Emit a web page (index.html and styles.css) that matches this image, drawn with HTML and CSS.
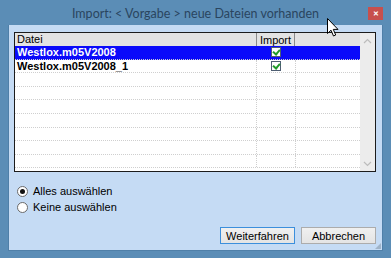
FILE: index.html
```html
<!DOCTYPE html>
<html>
<head>
<meta charset="utf-8">
<title>Import</title>
<link rel="stylesheet" href="styles.css">
</head>
<body>
    <div class="window">
        <!-- Titelleiste -->
        <div class="titlebar">
            <span></span>
            <span class="title">Import: &lt; Vorgabe &gt; neue Dateien vorhanden</span>
            <span class="close-wrap"><span class="close">&#x2715;</span></span>
        </div>

        <div class="client">
            <!-- Liste -->
            <div class="list">
                <div class="grid">
                    <div class="row head">
                        <div class="c-name">Datei</div>
                        <div class="c-imp">Import</div>
                        <div class="c-rest"></div>
                    </div>
                    <div class="row sel">
                        <div class="c-name">Westlox.m05V2008</div>
                        <div class="c-imp"><span class="chk"></span></div>
                        <div class="c-rest"></div>
                    </div>
                    <div class="row">
                        <div class="c-name">Westlox.m05V2008_1</div>
                        <div class="c-imp"><span class="chk"></span></div>
                        <div class="c-rest"></div>
                    </div>
                    <div class="row"><div class="c-name"></div><div class="c-imp"></div><div class="c-rest"></div></div>
                    <div class="row"><div class="c-name"></div><div class="c-imp"></div><div class="c-rest"></div></div>
                    <div class="row"><div class="c-name"></div><div class="c-imp"></div><div class="c-rest"></div></div>
                    <div class="row"><div class="c-name"></div><div class="c-imp"></div><div class="c-rest"></div></div>
                    <div class="row"><div class="c-name"></div><div class="c-imp"></div><div class="c-rest"></div></div>
                    <div class="row"><div class="c-name"></div><div class="c-imp"></div><div class="c-rest"></div></div>
                    <div class="row"><div class="c-name"></div><div class="c-imp"></div><div class="c-rest"></div></div>
                </div>
                <div class="scroll">
                    <svg width="9" height="6" viewBox="0 0 9 6"><path d="M1 5 L4.5 1.5 L8 5" fill="none" stroke="#bcbcbc" stroke-width="1.2"/></svg>
                    <svg width="9" height="6" viewBox="0 0 9 6"><path d="M1 1 L4.5 4.5 L8 1" fill="none" stroke="#bcbcbc" stroke-width="1.2"/></svg>
                </div>
            </div>

            <!-- Auswahl -->
            <div class="radios">
                <label class="radio on"><span class="dot"></span>Alles auswählen</label>
                <label class="radio"><span class="dot"></span>Keine auswählen</label>
            </div>

            <div class="buttons">
                <span class="btn focus">Weiterfahren</span>
                <span class="btn">Abbrechen</span>
            </div>
            <span class="grip"></span>
        </div>
    </div>

    <svg class="cursor" width="12" height="19" viewBox="0 0 12 19">
        <path d="M0.5 0.5 L0.5 15.5 L4 12.2 L6.5 18 L8.7 17 L6.3 11.4 L11 11.4 Z" fill="#fff" stroke="#000" stroke-width="1"/>
    </svg>
</body>
</html>
```

FILE: styles.css
```css
* { margin: 0; padding: 0; box-sizing: border-box; }
body { width: 391px; height: 258px; overflow: hidden; background: #5b8db6; font-family: "Liberation Sans", Arial, sans-serif; font-size: 11px; color: #000; position: relative; }

.window { display: flex; flex-direction: column; height: 258px; }

/* Titelleiste */
.titlebar { height: 25px; display: grid; grid-template-columns: 1fr auto 1fr; align-items: center; }
.title { font-family: Lato, "Noto Sans", sans-serif; font-size: 12.5px; color: #2a455f; padding-top: 1px; }
.close-wrap { display: flex; justify-content: flex-end; padding-right: 8px; padding-top: 2px; }
.close { width: 15px; height: 13px; background: #c7504d; color: #fff; font-size: 7px; font-weight: bold; display: flex; align-items: center; justify-content: center; }

.client { flex: 1; margin: 0 8px 7px 8px; background: #c5dbf4; padding: 7px 6px 6px 5px; display: flex; flex-direction: column; position: relative; border: 1px solid #4f7fa8; border-width: 0 1px 1px 1px; }

/* Liste */
.list { height: 140px; border: 1px solid #1c1c1c; background: #fff; display: flex; }
.grid { flex: 1; overflow: hidden; }
.row { display: flex; height: 13.6px; border-bottom: 1px dotted #cfcfcf; }
.row > div { height: 100%; }
.c-name { width: 241px; padding-left: 2px; font-weight: bold; line-height: 12px; white-space: nowrap; }
.c-imp { width: 39px; border-left: 1px dotted #cfcfcf; display: flex; justify-content: center; align-items: center; }
.c-rest { flex: 1; border-left: 1px dotted #cfcfcf; }

.row.head { height: 13px; background: #e3e3e3; border-bottom: none; }
.row.head .c-name { font-weight: normal; }
.row.head .c-imp { border-left: 1px solid #8a8a8a; border-right: 1px solid #8a8a8a; }
.row.head .c-rest { border-left: none; }

.row.sel { background: #0a0afa; color: #fff; }
.row.sel > div { border-color: #0a0afa; }

.chk { width: 10px; height: 10px; border: 1px solid #4e5e72; background: #fff; position: relative; }
.chk::after { content: ""; position: absolute; left: 2px; top: 0px; width: 3px; height: 5px; border: solid #1f9b28; border-width: 0 2px 2px 0; transform: rotate(40deg); }

.scroll { width: 15px; background: #ececec; display: flex; flex-direction: column; justify-content: space-between; align-items: center; padding: 5px 0 4px; }

/* Auswahl */
.radios { margin-top: 13px; display: flex; flex-direction: column; gap: 4px; padding-left: 3px; }
.radio { display: flex; align-items: center; gap: 5px; height: 12px; }
.dot { width: 11px; height: 11px; border-radius: 50%; border: 1px solid #6a6a6a; background: #fff; display: flex; align-items: center; justify-content: center; }
.radio.on .dot::after { content: ""; width: 5px; height: 5px; border-radius: 50%; background: #111; }

.buttons { margin-top: auto; display: flex; justify-content: flex-end; gap: 6px; }
.btn { width: 75px; height: 17px; border: 1px solid #acacac; background: linear-gradient(#f0f0f0, #e4e4e4); display: flex; align-items: center; justify-content: center; }
.btn.focus { border-color: #3c8fdc; }

.grip { position: absolute; right: 1px; bottom: 1px; width: 6px; height: 6px; background: radial-gradient(circle, #9fb3c8 0.8px, transparent 1px) 0 0 / 2px 2px; clip-path: polygon(100% 0, 100% 100%, 0 100%); }

.cursor { position: absolute; left: 327px; top: 18px; }
```
